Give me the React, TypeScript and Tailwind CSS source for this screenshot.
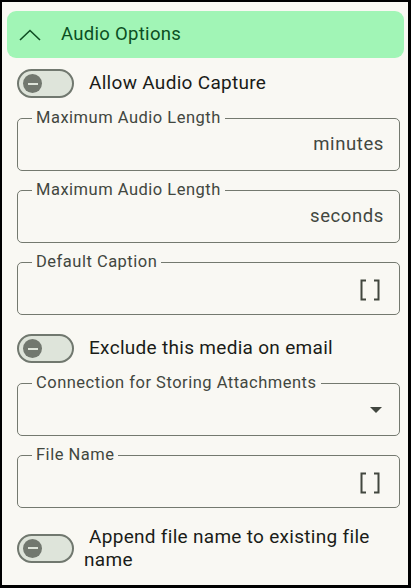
const font = { fontFamily: "Roboto, 'Noto Sans', sans-serif" };

function Toggle() {
  return (
    <div className="w-[57px] h-[29px] shrink-0 rounded-full border-2 border-[#71786f] bg-[#dee4da] flex items-center pl-[4px]">
      <div className="w-[19px] h-[19px] rounded-full bg-[#72786f] flex items-center justify-center">
        <div className="w-[10px] h-[2px] bg-[#dee4da]" />
      </div>
    </div>
  );
}

function BracketIcon() {
  return (
    <svg width="22" height="22" viewBox="0 0 22 22" fill="none" stroke="#42473f" strokeWidth="2">
      <path d="M7 1.5H2.5V20.5H7" />
      <path d="M15 1.5H19.5V20.5H15" />
    </svg>
  );
}

function Field({ label, children }: { label: string; children?: React.ReactNode }) {
  return (
    <fieldset className="border border-[#74796f] rounded-[5px] pl-[14px] pr-[15px] h-[63px] -mt-[10px]">
      <legend className="px-[4px] text-[16.5px] leading-[20px] text-[#42473f] tracking-[0.5px]">{label}</legend>
      <div className="h-[42px] flex items-center justify-end -mt-[4px]">{children}</div>
    </fieldset>
  );
}

export default function App() {
  return (
    <div style={font} className="w-[411px] h-[588px] border-t-2 border-l-2 border-r-[3px] border-b-[3px] border-black bg-[#f9f8f3] overflow-hidden">
      <div className="pt-[9px] pl-[5px] pr-[4px]">
        <div className="h-[47px] rounded-[9px] bg-[#a1f5b6] flex items-center text-[#0b4f22]">
          <svg width="22" height="12" viewBox="0 0 22 12" fill="none" stroke="#0f4d23" strokeWidth="1.6" className="ml-[12px]">
            <path d="M1 11L11 1.5L21 11" />
          </svg>
          <span className="ml-[20px] text-[18.5px] tracking-[0.3px]">Audio Options</span>
        </div>
      </div>

      <div className="pl-[15px] pr-[8px] flex flex-col">
        <div className="flex items-center gap-[15px] mt-[11px] h-[29px]">
          <Toggle />
          <span className="text-[19px] text-[#1a1c18] tracking-[0.3px]">Allow Audio Capture</span>
        </div>

        <div className="mt-[20px]">
          <Field label="Maximum Audio Length">
            <span className="text-[18.5px] text-[#42473f] tracking-[0.6px]">minutes</span>
          </Field>
        </div>
        <div className="mt-[19px]">
          <Field label="Maximum Audio Length">
            <span className="text-[18.5px] text-[#42473f] tracking-[0.6px]">seconds</span>
          </Field>
        </div>
        <div className="mt-[19px]">
          <Field label="Default Caption">
            <span className="mr-[3px] mt-[2px]"><BracketIcon /></span>
          </Field>
        </div>

        <div className="flex items-center gap-[15px] mt-[19px] h-[29px]">
          <Toggle />
          <span className="text-[19px] text-[#1a1c18] tracking-[0.3px]">Exclude this media on email</span>
        </div>

        <div className="mt-[20px]">
          <Field label="Connection for Storing Attachments">
            <svg width="12" height="6" viewBox="0 0 12 6" className="mr-[2px]">
              <path d="M0 0H12L6 6Z" fill="#42473f" />
            </svg>
          </Field>
        </div>
        <div className="mt-[19px]">
          <Field label="File Name">
            <span className="mr-[3px] mt-[2px]"><BracketIcon /></span>
          </Field>
        </div>

        <div className="flex items-center gap-[10px] mt-[17px]">
          <Toggle />
          <span className="text-[19px] leading-[23px] text-[#1a1c18] tracking-[0.3px]">&nbsp;Append file name to existing file name</span>
        </div>
      </div>
    </div>
  );
}
